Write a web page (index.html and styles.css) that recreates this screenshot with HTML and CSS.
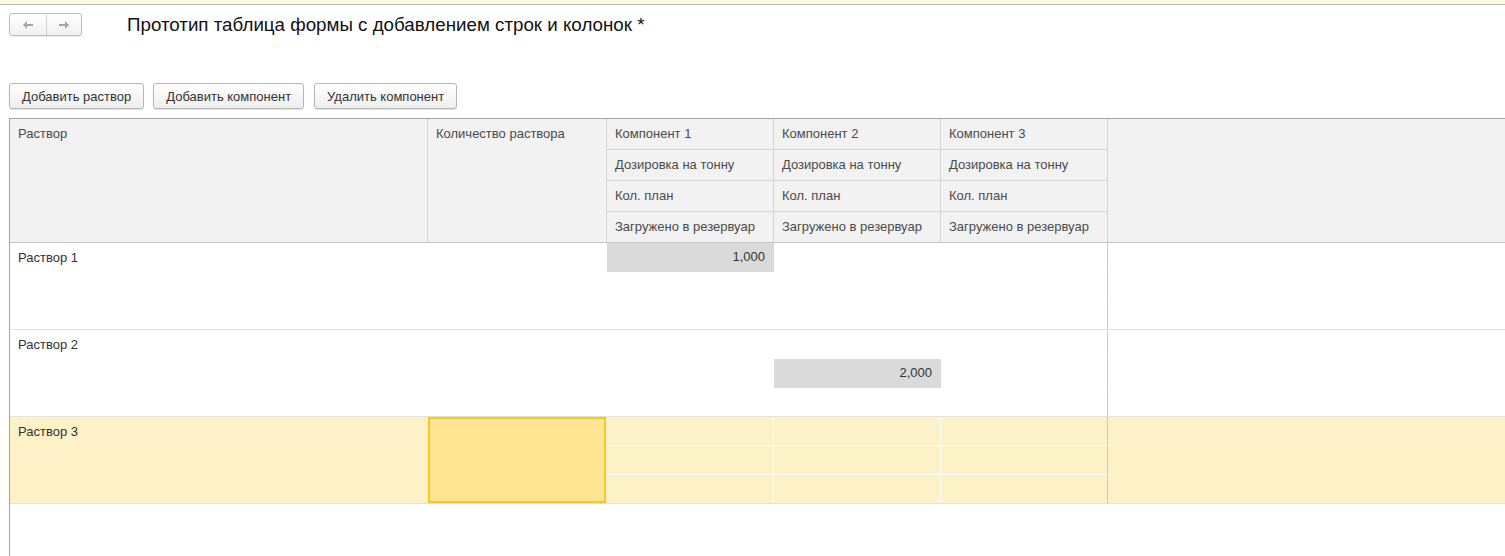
FILE: index.html
```html
<!DOCTYPE html>
<html lang="ru">
<head>
<meta charset="utf-8">
<title>Прототип таблица формы</title>
<link rel="stylesheet" href="styles.css">
</head>
<body>
<div class="topbar"></div>
<div class="head">
  <div class="nav">
    <button class="nav-btn nav-back"><svg width="10" height="8" viewBox="0 0 10 8"><path d="M0 4 L4 0 L4 3 L10 3 L10 5 L4 5 L4 8 Z" fill="#a4a4a4"/></svg></button>
    <button class="nav-btn nav-fwd"><svg width="10" height="8" viewBox="0 0 10 8"><path d="M10 4 L6 0 L6 3 L0 3 L0 5 L6 5 L6 8 Z" fill="#a4a4a4"/></svg></button>
  </div>
  <div class="title">Прототип таблица формы с добавлением строк и колонок *</div>
</div>
<div class="toolbar">
  <button class="btn">Добавить раствор</button>
  <button class="btn">Добавить компонент</button>
  <button class="btn btn-last">Удалить компонент</button>
</div>
<div class="table">
  <div class="thead">
    <div class="th th-main">Раствор</div>
    <div class="th th-main">Количество раствора</div>
    <div class="th">Компонент 1</div>
    <div class="th">Дозировка на тонну</div>
    <div class="th">Кол. план</div>
    <div class="th">Загружено в резервуар</div>
    <div class="th">Компонент 2</div>
    <div class="th">Дозировка на тонну</div>
    <div class="th">Кол. план</div>
    <div class="th">Загружено в резервуар</div>
    <div class="th">Компонент 3</div>
    <div class="th">Дозировка на тонну</div>
    <div class="th">Кол. план</div>
    <div class="th">Загружено в резервуар</div>
    <div class="th th-main"></div>
  </div>

  <div class="row">
    <div class="cell name">Раствор 1</div>
    <div class="cell qty"></div>
    <div class="cell k val">1,000</div>
    <div class="cell k"></div>
    <div class="cell k k-last-sub"></div>
    <div class="cell k"></div>
    <div class="cell k"></div>
    <div class="cell k k-last-sub"></div>
    <div class="cell k k3"></div>
    <div class="cell k k3"></div>
    <div class="cell k k3 k-last-sub"></div>
    <div class="cell rest"></div>
  </div>

  <div class="row">
    <div class="cell name">Раствор 2</div>
    <div class="cell qty"></div>
    <div class="cell k"></div>
    <div class="cell k"></div>
    <div class="cell k k-last-sub"></div>
    <div class="cell k"></div>
    <div class="cell k val">2,000</div>
    <div class="cell k k-last-sub"></div>
    <div class="cell k k3"></div>
    <div class="cell k k3"></div>
    <div class="cell k k3 k-last-sub"></div>
    <div class="cell rest"></div>
  </div>

  <div class="row row-selected">
    <div class="cell name">Раствор 3</div>
    <div class="cell qty qty-active"></div>
    <div class="cell k"></div>
    <div class="cell k"></div>
    <div class="cell k k-last-sub"></div>
    <div class="cell k"></div>
    <div class="cell k"></div>
    <div class="cell k k-last-sub"></div>
    <div class="cell k k3"></div>
    <div class="cell k k3"></div>
    <div class="cell k k3 k-last-sub"></div>
    <div class="cell rest"></div>
  </div>
</div>
</body>
</html>
```

FILE: styles.css
```css
* {
  box-sizing: border-box;
}

html, body {
  margin: 0;
  padding: 0;
  height: 100%;
  background: #ffffff;
  overflow: hidden;
}

body {
  font-family: "Liberation Sans", Arial, sans-serif;
  font-size: 13px;
  color: #333333;
}

.topbar {
  height: 5px;
  background: #fcf9dc;
  border-bottom: 1px solid #b5b5b5;
}

.head {
  display: flex;
  align-items: center;
  padding: 8px 0 0 9px;
  height: 31px;
}

.nav {
  display: flex;
  height: 23px;
  border: 1px solid #bcbcbc;
  border-radius: 3px;
  background: linear-gradient(#ffffff, #f1f1f1);
  box-shadow: 0 1px 1px rgba(0, 0, 0, 0.08);
}

.nav-btn {
  display: flex;
  align-items: center;
  justify-content: center;
  height: 21px;
  padding: 0;
  margin: 0;
  border: 0;
  background: transparent;
}

.nav-back {
  width: 36px;
}

.nav-fwd {
  width: 35px;
  border-left: 1px solid #d2d2d2;
}

.title {
  margin-left: 45px;
  font-size: 18.75px;
  color: #111111;
}

.toolbar {
  display: flex;
  gap: 9px;
  margin-top: 47px;
  padding-left: 9px;
}

.btn {
  height: 26px;
  padding: 0 12px;
  border: 1px solid #b6b6b6;
  border-radius: 3px;
  background: linear-gradient(#ffffff, #eeeeee);
  box-shadow: 0 1px 1px rgba(0, 0, 0, 0.12);
  font-family: "Liberation Sans", Arial, sans-serif;
  font-size: 13px;
  color: #333333;
}

.btn-last {
  margin-left: 1px;
}

.table {
  margin-top: 9px;
  margin-left: 9px;
  height: calc(100% - 118px);
  border-left: 1px solid #a3a3a3;
  border-top: 1px solid #a3a3a3;
}

.thead {
  display: grid;
  grid-template-columns: 417px 178px 166px 166px 166px 1fr;
  grid-template-rows: repeat(4, 30px);
  grid-auto-flow: column;
  gap: 1px;
  background: #d5d5d5;
  border-bottom: 1px solid #c4c4c4;
}

.th {
  background: #f2f2f2;
  color: #4a4a4a;
  line-height: 30px;
  padding: 0 8px;
  white-space: nowrap;
}

.th-main {
  grid-row: span 4;
}

.row {
  display: grid;
  grid-template-columns: 418px 179px 167px 167px 167px 1fr;
  grid-template-rows: 29px 29px 28px;
  grid-auto-flow: column;
  border-bottom: 1px solid #e0e0e0;
  background: #ffffff;
}

.cell {
  line-height: 28px;
  padding: 0 8px;
  white-space: nowrap;
}

.name,
.qty,
.rest {
  grid-row: span 3;
  line-height: 29px;
}

.k {
  border-right: 1px solid transparent;
  border-bottom: 1px solid transparent;
}

.k-last-sub {
  border-bottom: 0;
}

.k3 {
  border-right-color: #c9c9c9;
}

.val {
  background: #dadada;
  text-align: right;
  line-height: 28px;
}

.row-selected {
  background: #fdf2c7;
}

.row-selected .k {
  border-bottom-color: #ffffff;
  border-right-color: #ffffff;
}

.row-selected .k3 {
  border-right-color: #c9c9c9;
}

.row-selected .k-last-sub {
  border-bottom: 0;
}

.qty-active {
  margin-right: 1px;
  background: #fde591;
  border: 2px solid #f7c821;
}
```
